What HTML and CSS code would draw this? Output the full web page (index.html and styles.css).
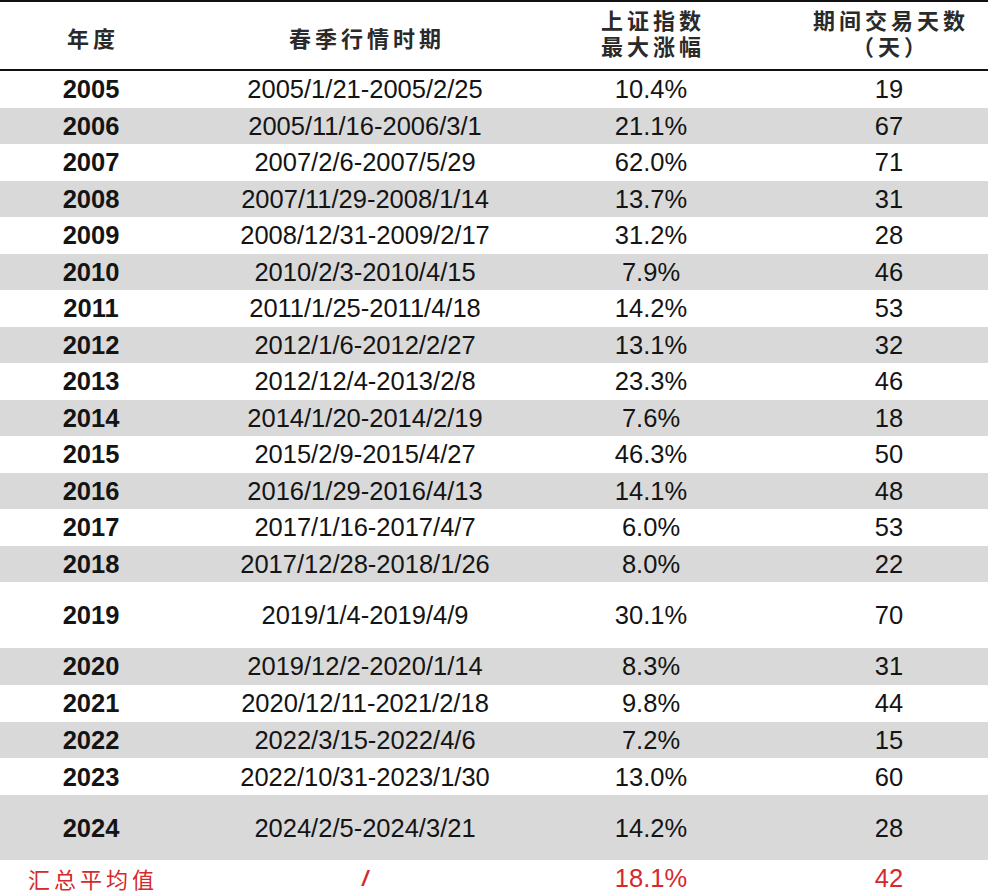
FILE: index.html
```html
<!DOCTYPE html>
<html lang="zh-CN">
<head>
<meta charset="utf-8">
<title>春季行情</title>
<link rel="stylesheet" href="styles.css">
</head>
<body>
<div class="table">
  <div class="row head">
    <div class="c c1"><div class="hd">年度</div></div>
    <div class="c c2"><div class="hd">春季行情时期</div></div>
    <div class="c c3"><div class="hd l1">上证指数</div><div class="hd l2">最大涨幅</div></div>
    <div class="c c4"><div class="hd l1">期间交易天数</div><div class="hd l2">（天）</div></div>
  </div>
  <div class="row"><div class="c c1 y">2005</div><div class="c c2">2005/1/21-2005/2/25</div><div class="c c3">10.4%</div><div class="c c4">19</div></div>
  <div class="row g"><div class="c c1 y">2006</div><div class="c c2">2005/11/16-2006/3/1</div><div class="c c3">21.1%</div><div class="c c4">67</div></div>
  <div class="row"><div class="c c1 y">2007</div><div class="c c2">2007/2/6-2007/5/29</div><div class="c c3">62.0%</div><div class="c c4">71</div></div>
  <div class="row g"><div class="c c1 y">2008</div><div class="c c2">2007/11/29-2008/1/14</div><div class="c c3">13.7%</div><div class="c c4">31</div></div>
  <div class="row"><div class="c c1 y">2009</div><div class="c c2">2008/12/31-2009/2/17</div><div class="c c3">31.2%</div><div class="c c4">28</div></div>
  <div class="row g"><div class="c c1 y">2010</div><div class="c c2">2010/2/3-2010/4/15</div><div class="c c3">7.9%</div><div class="c c4">46</div></div>
  <div class="row"><div class="c c1 y">2011</div><div class="c c2">2011/1/25-2011/4/18</div><div class="c c3">14.2%</div><div class="c c4">53</div></div>
  <div class="row g"><div class="c c1 y">2012</div><div class="c c2">2012/1/6-2012/2/27</div><div class="c c3">13.1%</div><div class="c c4">32</div></div>
  <div class="row"><div class="c c1 y">2013</div><div class="c c2">2012/12/4-2013/2/8</div><div class="c c3">23.3%</div><div class="c c4">46</div></div>
  <div class="row g"><div class="c c1 y">2014</div><div class="c c2">2014/1/20-2014/2/19</div><div class="c c3">7.6%</div><div class="c c4">18</div></div>
  <div class="row"><div class="c c1 y">2015</div><div class="c c2">2015/2/9-2015/4/27</div><div class="c c3">46.3%</div><div class="c c4">50</div></div>
  <div class="row g"><div class="c c1 y">2016</div><div class="c c2">2016/1/29-2016/4/13</div><div class="c c3">14.1%</div><div class="c c4">48</div></div>
  <div class="row"><div class="c c1 y">2017</div><div class="c c2">2017/1/16-2017/4/7</div><div class="c c3">6.0%</div><div class="c c4">53</div></div>
  <div class="row g"><div class="c c1 y">2018</div><div class="c c2">2017/12/28-2018/1/26</div><div class="c c3">8.0%</div><div class="c c4">22</div></div>
  <div class="row tall"><div class="c c1 y">2019</div><div class="c c2">2019/1/4-2019/4/9</div><div class="c c3">30.1%</div><div class="c c4">70</div></div>
  <div class="row g mid"><div class="c c1 y">2020</div><div class="c c2">2019/12/2-2020/1/14</div><div class="c c3">8.3%</div><div class="c c4">31</div></div>
  <div class="row mid"><div class="c c1 y">2021</div><div class="c c2">2020/12/11-2021/2/18</div><div class="c c3">9.8%</div><div class="c c4">44</div></div>
  <div class="row g mid"><div class="c c1 y">2022</div><div class="c c2">2022/3/15-2022/4/6</div><div class="c c3">7.2%</div><div class="c c4">15</div></div>
  <div class="row mid"><div class="c c1 y">2023</div><div class="c c2">2022/10/31-2023/1/30</div><div class="c c3">13.0%</div><div class="c c4">60</div></div>
  <div class="row g tall2"><div class="c c1 y">2024</div><div class="c c2">2024/2/5-2024/3/21</div><div class="c c3">14.2%</div><div class="c c4">28</div></div>
  <div class="row sum"><div class="c c1"><span class="sumlabel">汇总平均值</span></div><div class="c c2"><span class="slash">/</span></div><div class="c c3">18.1%</div><div class="c c4">42</div></div>
</div>
</body>
</html>
```
FILE: styles.css
```css
html, body {
  margin: 0;
  padding: 0;
  background: #ffffff;
  overflow: hidden;
}
.table {
  width: 988px;
  font-family: "Liberation Sans", Arial, "Noto Sans CJK SC", sans-serif;
  font-size: 25.5px;
  color: #141414;
  border-top: 2px solid #111;
}
.row {
  display: grid;
  grid-template-columns: 182px 366px 206px 234px;
  height: 36.5px;
  align-items: center;
}
.row.g { background: #d9d9d9; }
.row.tall { height: 66px; }
.row.mid { height: 36.75px; }
.row.tall2 { height: 65px; }
.row.sum { height: 36px; color: #d42a2e; }
.row.head {
  height: 67px;
  border-bottom: 2px solid #111;
}
.c {
  text-align: center;
  white-space: nowrap;
  line-height: 28px;
}
.c4 { padding-left: 36px; }
.y { font-weight: bold; }
.hd {
  font-family: "Noto Sans CJK SC", sans-serif;
  font-weight: bold;
  font-size: 22px;
  letter-spacing: 4px;
  line-height: 26px;
  height: 26px;
  color: #2a2a2a;
  padding-left: 4px;
}
.head .c1 .hd, .head .c2 .hd { margin-top: 2px; }
.hd.l1 { margin-top: -8px; }
.hd.l2 { margin-top: 0; }
.sumlabel {
  font-family: "Noto Sans CJK SC", sans-serif;
  font-size: 22px;
  letter-spacing: 4px;
  margin-right: -4px;
}
.slash {
  display: inline-block;
  font-style: italic;
  font-weight: bold;
  font-size: 22px;
}
```
